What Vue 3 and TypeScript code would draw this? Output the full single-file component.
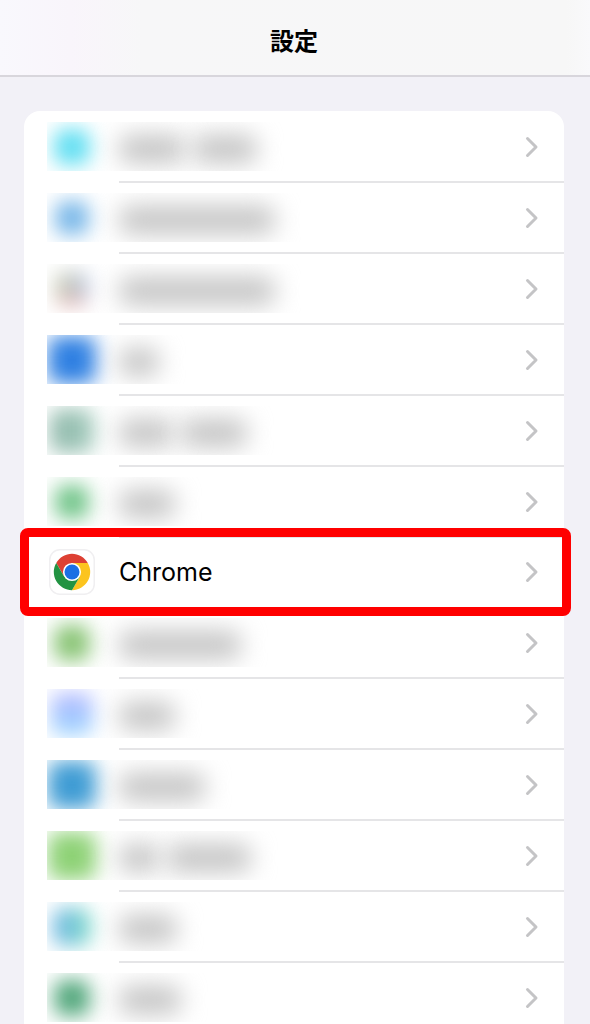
<script setup lang="ts">
interface Row {
  name?: string
  fill?: string
  words?: number[]
  size?: number
}

const rows: Row[] = [
  { fill: '#62dff2', words: [66, 64], size: 36 },
  { fill: '#78b7e8', words: [156], size: 34 },
  {
    fill: 'linear-gradient(transparent 60%, #f0a8a8), linear-gradient(90deg, #c9cfb4, #c2c6c4 55%, #b4c6ea)',
    words: [156],
    size: 34,
  },
  { fill: '#2f80e2', words: [40], size: 48 },
  { fill: 'linear-gradient(90deg, #8fb8aa, #a2cabc)', words: [54, 66], size: 44 },
  { fill: '#70c488', words: [56], size: 34 },
  { name: 'Chrome' },
  { fill: '#88c474', words: [122], size: 36 },
  { fill: 'linear-gradient(#b4b6ff, #98d6ff)', words: [56], size: 42 },
  { fill: '#3f9cd4', words: [86], size: 48 },
  { fill: '#8ed276', words: [40, 84], size: 48 },
  { fill: 'linear-gradient(90deg, #6cb2e6, #7ddcc6)', words: [58], size: 38 },
  { fill: '#50a67a', words: [62], size: 36 },
]
</script>

<template>
  <div class="screen">
    <header class="bar"><h1>設定</h1></header>
    <main class="content">
      <ul class="card">
        <li v-for="(row, i) in rows" :key="i" class="item" :class="{ marked: row.name }">
          <button type="button" class="row" :aria-label="row.name ?? 'アプリ'">
            <template v-if="row.name">
              <svg class="app-icon" viewBox="0 0 46 46" aria-hidden="true">
                <rect x="0.75" y="0.75" width="44.5" height="44.5" rx="10" fill="#fff" stroke="#f0eff1" stroke-width="1.5" />
                <g transform="translate(23 23)">
                  <path d="M-15.76-9.1A18.2 18.2 0 0 1 15.76-9.1L0-9.1-7.88 4.55Z" fill="#dd4033" />
                  <path d="M15.76-9.1A18.2 18.2 0 0 1 0 18.2L7.88 4.55 0-9.1Z" fill="#fcc41e" />
                  <path d="M0 18.2A18.2 18.2 0 0 1-15.76-9.1L-7.88 4.55 7.88 4.55Z" fill="#229342" />
                  <circle r="9.1" fill="#fff" />
                  <circle r="7.5" fill="#1b6fe4" />
                </g>
              </svg>
              <span class="label">{{ row.name }}</span>
            </template>
            <span v-else class="veil">
              <span class="blob-slot">
                <span class="blob" :style="{ '--fill': row.fill, '--size': row.size + 'px' }" />
              </span>
              <span v-for="(w, n) in row.words" :key="n" class="word" :style="{ width: w + 'px' }" />
            </span>
            <svg class="chevron" viewBox="0 0 14 22" aria-hidden="true">
              <path d="M2.5 2.5 11 11 2.5 19.5" fill="none" stroke="#c4c4c6" stroke-width="3" stroke-linecap="round" stroke-linejoin="round" />
            </svg>
          </button>
        </li>
      </ul>
    </main>
  </div>
</template>

<style>
html,
body {
  background: #f2f1f7;
}
body {
  height: 100vh;
  overflow: hidden;
}
</style>

<style scoped>
.screen {
  height: 100vh;
  overflow: hidden;
  background: #f2f1f7;
  color: #000;
  font-family: Inter, "Noto Sans CJK JP", sans-serif;
}
.bar {
  display: flex;
  align-items: center;
  justify-content: center;
  box-sizing: border-box;
  height: 77px;
  padding: 4px 2px 0 0;
  border-bottom: 2px solid #d8d6dc;
  background: linear-gradient(90deg, #f9f8fd 0, #f9f5fb 12%, #f7f7f8 24%, #f7f7f7 96%, #f9f9fb 100%);
}
h1 {
  margin: 0;
  font-family: "Noto Sans CJK JP", sans-serif;
  font-size: 24px;
  line-height: 36px;
  font-weight: 700;
}
.content {
  padding: 34px 26px 0 24px;
}
.card {
  margin: 0;
  padding: 0 0 24px;
  list-style: none;
  background: #fff;
  border-radius: 16px;
}
.item {
  position: relative;
}
.item::after {
  content: "";
  position: absolute;
  left: 95px;
  right: 0;
  bottom: -1px;
  height: 2px;
  background: #e5e5e7;
}
.item.marked::after {
  left: -4px;
  right: -7px;
  top: -9px;
  bottom: -9px;
  height: auto;
  z-index: 1;
  border: 9px solid #ff0000;
  border-radius: 8px;
  background: none;
  pointer-events: none;
}
.row {
  display: flex;
  align-items: center;
  width: 100%;
  height: 71px;
  padding: 0 25px 0 23px;
  border: 0;
  background: none;
  color: inherit;
  font: inherit;
  text-align: left;
}
.marked .row {
  height: 70px;
}
.app-icon {
  flex: none;
  width: 46px;
  height: 46px;
  margin-left: 2px;
}
.label {
  margin-left: 24px;
  font-size: 25px;
  line-height: 36px;
}
.chevron {
  flex: none;
  width: 14px;
  height: 22px;
  margin-left: auto;
}
.veil {
  display: flex;
  align-items: center;
  gap: 8px;
  width: 254px;
  height: 49px;
  overflow: hidden;
}
.blob-slot {
  display: flex;
  flex: none;
  justify-content: center;
  width: 50px;
  margin-right: 14px;
}
.blob {
  flex: none;
  width: var(--size);
  height: var(--size);
  border-radius: 10px;
  background: var(--fill);
  filter: blur(10px);
}
.word {
  flex: none;
  height: 28px;
  margin-top: 4px;
  border-radius: 10px;
  background: #c4c4c4;
  filter: blur(12px);
}
</style>
